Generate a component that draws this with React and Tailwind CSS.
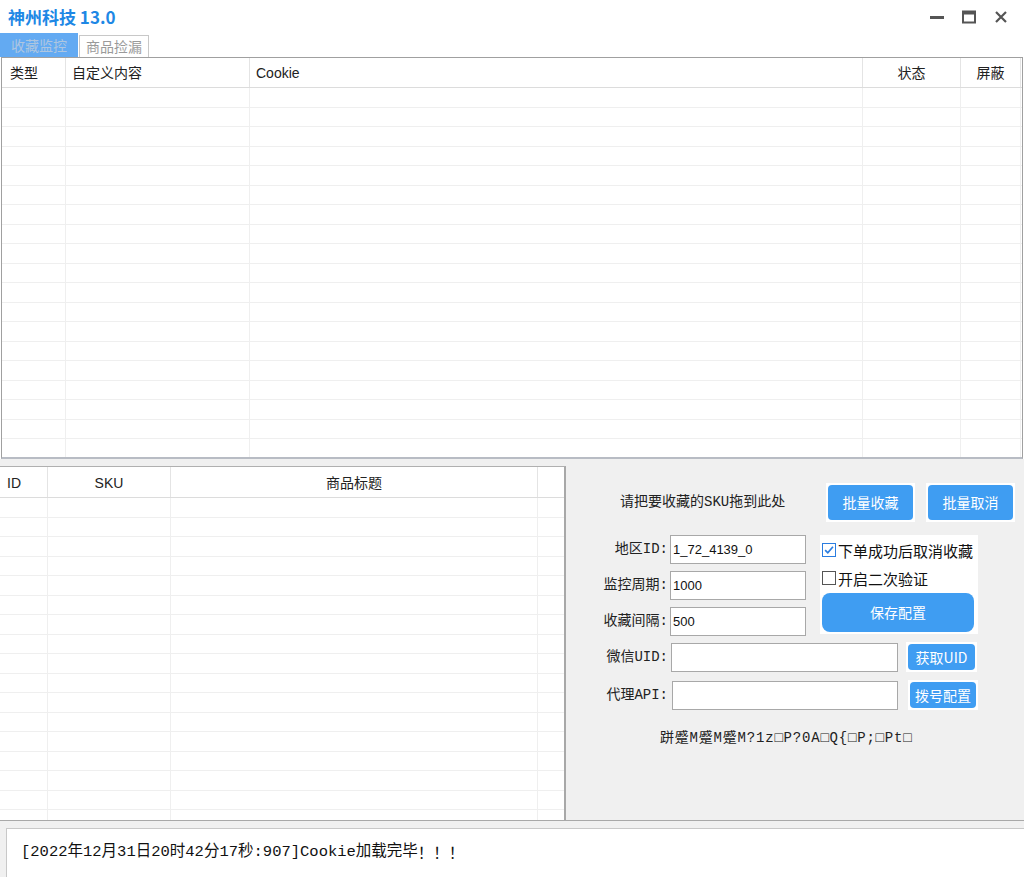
import React from "react";

const cjk = { fontFamily: '"Noto Sans CJK SC", "Microsoft YaHei", sans-serif' };
const song = { fontFamily: '"Liberation Mono", "Noto Sans CJK SC", monospace' };

function TopTable() {
  const rows = Array.from({ length: 19 });
  return (
    <div className="h-[402px] border border-[#a0a0a0] border-b-2 border-b-[#b8bcc4] ml-[1px] mr-[1px] bg-white overflow-hidden" style={cjk}>
      <div className="grid grid-cols-[64px_184px_613px_98px_60px_1fr] h-[30px] border-b border-[#dcdcdc] text-[14px] text-[#222]">
        <div className="flex items-center pl-[8px] border-r border-[#e4e4e4]">类型</div>
        <div className="flex items-center pl-[6px] border-r border-[#e4e4e4]">自定义内容</div>
        <div className="flex items-center pl-[6px] pt-[2px] border-r border-[#e4e4e4]" style={{ fontFamily: '"Liberation Sans", sans-serif' }}>Cookie</div>
        <div className="flex items-center justify-center border-r border-[#e4e4e4]">状态</div>
        <div className="flex items-center justify-center border-r border-[#e4e4e4]">屏蔽</div>
        <div></div>
      </div>
      {rows.map((_, i) => (
        <div key={i} className="grid grid-cols-[64px_184px_613px_98px_60px_1fr] h-[19.5px] border-b border-[#efefef]">
          <div className="border-r border-[#efefef]"></div>
          <div className="border-r border-[#efefef]"></div>
          <div className="border-r border-[#efefef]"></div>
          <div className="border-r border-[#efefef]"></div>
          <div className="border-r border-[#efefef]"></div>
          <div></div>
        </div>
      ))}
    </div>
  );
}

function BottomTable() {
  const rows = Array.from({ length: 17 });
  return (
    <div className="w-[566px] h-full border-t border-[#b0b0b0] border-r-2 border-r-[#a8a8a8] bg-white overflow-hidden" style={cjk}>
      <div className="grid grid-cols-[48px_123px_367px_1fr] h-[31px] border-b border-[#dcdcdc] text-[14px] text-[#222]">
        <div className="flex items-center pl-[7px] pt-[2px] border-r border-[#e4e4e4]" style={{ fontFamily: '"Liberation Sans", sans-serif' }}>ID</div>
        <div className="flex items-center justify-center pt-[2px] border-r border-[#e4e4e4]" style={{ fontFamily: '"Liberation Sans", sans-serif' }}>SKU</div>
        <div className="flex items-center justify-center border-r border-[#e4e4e4]">商品标题</div>
        <div></div>
      </div>
      {rows.map((_, i) => (
        <div key={i} className="grid grid-cols-[48px_123px_367px_1fr] h-[19.5px] border-b border-[#efefef]">
          <div className="border-r border-[#efefef]"></div>
          <div className="border-r border-[#efefef]"></div>
          <div className="border-r border-[#efefef]"></div>
          <div></div>
        </div>
      ))}
    </div>
  );
}

function BlueBtn({ children, className }) {
  return (
    <div className={"bg-white p-[2px] " + className}>
      <div className="w-full h-full bg-[#3f9df2] rounded-[4px] flex items-center justify-center text-white text-[14px]" style={cjk}>
        {children}
      </div>
    </div>
  );
}

function Label({ children, w = "w-[88px]" }) {
  return (
    <div className={w + " text-right text-[14px] text-[#222] pr-[2px]"} style={song}>
      {children}
    </div>
  );
}

function Input({ value, className }) {
  return (
    <div className={"bg-white border border-[#a8a8a8] flex items-center pl-[2px] text-[13px] text-[#111] " + className} style={{ fontFamily: '"Liberation Sans", sans-serif' }}>
      {value}
    </div>
  );
}

const garbled = "跰蹙M蹙M蹙M?1z□P?0A□Q{□P;□Pt□";

function RightPanel() {
  return (
    <div className="flex-1 bg-[#f0f0f0] flex flex-col">
      <div className="flex items-center mt-[18px] h-[36px]">
        <div className="pl-[54px] w-[260px] text-[14px] text-[#222]" style={song}>
          请把要收藏的SKU拖到此处
        </div>
        <BlueBtn className="w-[89px] h-[39px]">批量收藏</BlueBtn>
        <BlueBtn className="w-[89px] h-[39px] ml-[11px]">批量取消</BlueBtn>
      </div>
      <div className="flex mt-[15px]">
        <div className="flex flex-col gap-[7px] ml-[16px]">
          <div className="flex items-center">
            <Label>地区ID:</Label>
            <Input value="1_72_4139_0" className="w-[136px] h-[29px]" />
          </div>
          <div className="flex items-center">
            <Label>监控周期:</Label>
            <Input value="1000" className="w-[136px] h-[29px]" />
          </div>
          <div className="flex items-center">
            <Label>收藏间隔:</Label>
            <Input value="500" className="w-[136px] h-[29px]" />
          </div>
        </div>
        <div className="ml-[14px] w-[158px] h-[99px] bg-white flex flex-col pl-[2px]" style={cjk}>
          <div className="flex items-center h-[28px] mt-[1px]">
            <div className="w-[14px] h-[14px] border border-[#2b7de0] flex items-center justify-center bg-white">
              <svg viewBox="0 0 14 14" className="w-[14px] h-[14px]">
                <path d="M2.5 7.2 L5.6 10.3 L11.6 3.2" fill="none" stroke="#2b7de0" strokeWidth="2" />
              </svg>
            </div>
            <span className="ml-[2px] text-[15px] text-[#111] leading-none">下单成功后取消收藏</span>
          </div>
          <div className="flex items-center h-[28px]">
            <div className="w-[14px] h-[14px] border border-[#555] bg-white"></div>
            <span className="ml-[2px] text-[15px] text-[#111] leading-none">开启二次验证</span>
          </div>
          <div className="w-[152px] h-[39px] mt-[1px] bg-[#3f9df2] rounded-[8px] flex items-center justify-center text-white text-[14px]">
            保存配置
          </div>
        </div>
      </div>
      <div className="flex items-center mt-[6px]">
        <Label w="w-[104px]">微信UID:</Label>
        <Input value="" className="w-[227px] h-[29px] ml-[1px]" />
        <BlueBtn className="w-[71px] h-[30px] ml-[8px]">获取UID</BlueBtn>
      </div>
      <div className="flex items-center mt-[8px]">
        <Label w="w-[104px]">代理API:</Label>
        <Input value="" className="w-[226px] h-[29px] ml-[2px]" />
        <BlueBtn className="w-[70px] h-[30px] ml-[10px]">拨号配置</BlueBtn>
      </div>
      <div className="mt-[18px] ml-[94px] text-[14px] text-[#222] tracking-[0.8px]" style={song}>
        {garbled}
      </div>
    </div>
  );
}

export default function App() {
  return (
    <div className="w-[1024px] h-[877px] bg-white flex flex-col overflow-hidden">
      <div className="h-[33px] flex items-center justify-between shrink-0">
        <div className="pl-[8px] text-[17px] font-bold text-[#1e88e5]" style={cjk}>
          神州科技 13.0
        </div>
        <div className="flex items-center gap-[18px] pr-[16px]">
          <svg viewBox="0 0 14 14" className="w-[14px] h-[14px]">
            <rect x="0" y="6" width="14" height="3" fill="#555" />
          </svg>
          <svg viewBox="0 0 14 14" className="w-[14px] h-[14px]">
            <rect x="1" y="1.5" width="12" height="11" fill="none" stroke="#555" strokeWidth="2" />
            <rect x="1" y="1.5" width="12" height="3" fill="#555" />
          </svg>
          <svg viewBox="0 0 14 14" className="w-[14px] h-[14px]">
            <path d="M2 2 L12 12 M12 2 L2 12" stroke="#555" strokeWidth="2.2" />
          </svg>
        </div>
      </div>
      <div className="h-[24px] flex items-end shrink-0 text-[14px]" style={cjk}>
        <div className="w-[78px] h-[24px] bg-[#63aaf2] text-[#aec6e0] flex items-center justify-center">收藏监控</div>
        <div className="w-[70px] h-[22px] ml-[1px] bg-white border border-[#c8c8c8] border-b-0 text-[#9a9a9a] flex items-center justify-center">商品捡漏</div>
      </div>
      <TopTable />
      <div className="h-[7px] bg-[#f0f0f0] shrink-0"></div>
      <div className="h-[354px] flex shrink-0">
        <BottomTable />
        <RightPanel />
      </div>
      <div className="h-[57px] bg-[#f0f0f0] border-t border-[#a8a8a8] shrink-0 pl-[6px] pt-[7px]">
        <div className="h-full bg-white border-l border-t border-[#c8c8c8] flex items-center pl-[14px] text-[15.5px] text-[#111]" style={song}>
          [2022年12月31日20时42分17秒:907]Cookie加载完毕<span style={cjk}>！！！</span>
        </div>
      </div>
    </div>
  );
}
